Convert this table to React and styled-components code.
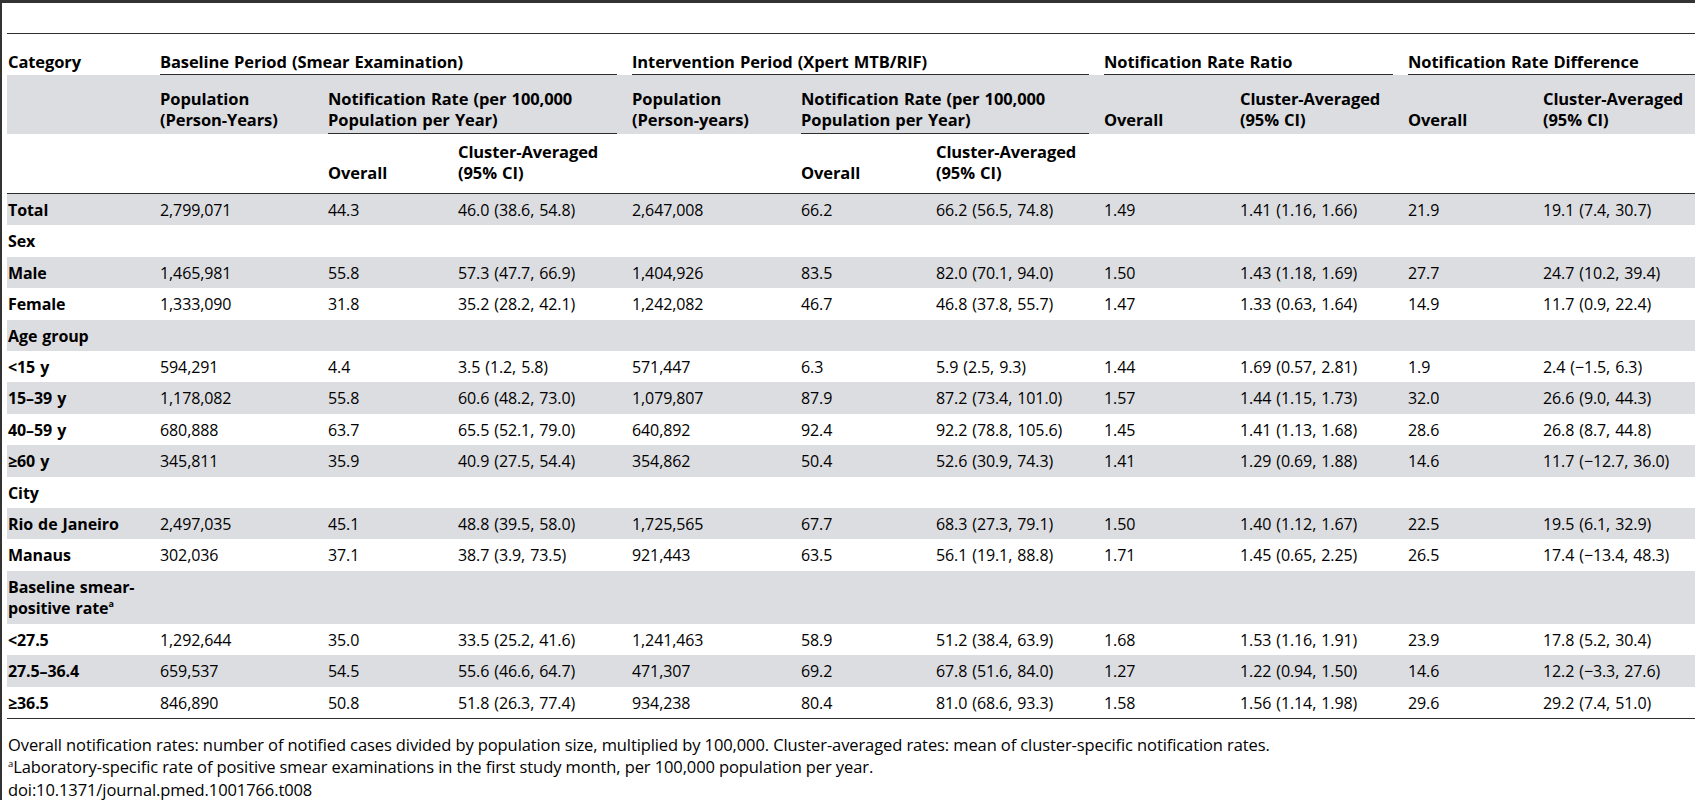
import React from 'react';
import styled, { createGlobalStyle } from 'styled-components';

const GlobalStyle = createGlobalStyle`
  html, body {
    margin: 0;
    padding: 0;
    background: #ffffff;
    overflow: hidden;
  }
  body {
    font-family: "Open Sans", "Liberation Sans", sans-serif;
    color: #000000;
  }
`;

const COLUMNS = '153px 168px 130px 174px 169px 135px 168px 136px 168px 135px 170px';
const SHADE = '#dcdde0';
const RULE = '#2e2e2e';

const Frame = styled.div`
  width: 1695px;
  height: 800px;
  box-sizing: border-box;
  border-top: 3px solid #333333;
  border-left: 2px solid #333333;
  padding-left: 5px;
  overflow: hidden;
`;

const Table = styled.div`
  width: 1726px;
  margin-top: 30px;
  border-top: 1px solid ${RULE};
  border-bottom: 1px solid ${RULE};
  font-size: 16px;
  letter-spacing: -0.1px;
  word-spacing: 1px;
`;

const Head = styled.div`
  border-bottom: 1px solid ${RULE};
  font-size: 16.5px;
`;

const HeadRow = styled.div`
  display: grid;
  grid-template-columns: ${COLUMNS};
  align-items: end;
  background: ${(p) => (p.$shaded ? SHADE : 'transparent')};
`;

const HeadCell = styled.div`
  grid-column: span ${(p) => p.$span || 1};
  font-weight: 700;
  line-height: 21px;
  white-space: nowrap;
  padding: ${(p) => p.$pad || '0'};
  margin-right: ${(p) => (p.$rule ? '15px' : '0')};
  border-bottom: ${(p) => (p.$rule ? `1px solid ${RULE}` : 'none')};
`;

const BodyRow = styled.div`
  display: grid;
  grid-template-columns: ${COLUMNS};
  align-items: center;
  background: ${(p) => (p.$shaded ? SHADE : 'transparent')};
`;

const Cell = styled.div`
  padding: 6px 0 4px;
  line-height: 21.4px;
  white-space: nowrap;
  font-weight: ${(p) => (p.$label ? 700 : 400)};
  padding-left: ${(p) => (p.$label ? '1px' : '0')};

  sup {
    font-size: 9px;
    line-height: 0;
    vertical-align: 7px;
  }
`;

const Notes = styled.div`
  margin-top: 15px;
  padding-left: 1px;
  font-size: 16.5px;
  letter-spacing: -0.1px;
  line-height: 22.5px;

  sup {
    font-size: 9.5px;
    line-height: 0;
    vertical-align: 6px;
  }
`;

const NoteLine = styled.div`
  white-space: nowrap;
`;

const rows = [
  ['Total', '2,799,071', '44.3', '46.0 (38.6, 54.8)', '2,647,008', '66.2', '66.2 (56.5, 74.8)', '1.49', '1.41 (1.16, 1.66)', '21.9', '19.1 (7.4, 30.7)'],
  ['Sex'],
  ['Male', '1,465,981', '55.8', '57.3 (47.7, 66.9)', '1,404,926', '83.5', '82.0 (70.1, 94.0)', '1.50', '1.43 (1.18, 1.69)', '27.7', '24.7 (10.2, 39.4)'],
  ['Female', '1,333,090', '31.8', '35.2 (28.2, 42.1)', '1,242,082', '46.7', '46.8 (37.8, 55.7)', '1.47', '1.33 (0.63, 1.64)', '14.9', '11.7 (0.9, 22.4)'],
  ['Age group'],
  ['<15 y', '594,291', '4.4', '3.5 (1.2, 5.8)', '571,447', '6.3', '5.9 (2.5, 9.3)', '1.44', '1.69 (0.57, 2.81)', '1.9', '2.4 (\u22121.5, 6.3)'],
  ['15\u201339 y', '1,178,082', '55.8', '60.6 (48.2, 73.0)', '1,079,807', '87.9', '87.2 (73.4, 101.0)', '1.57', '1.44 (1.15, 1.73)', '32.0', '26.6 (9.0, 44.3)'],
  ['40\u201359 y', '680,888', '63.7', '65.5 (52.1, 79.0)', '640,892', '92.4', '92.2 (78.8, 105.6)', '1.45', '1.41 (1.13, 1.68)', '28.6', '26.8 (8.7, 44.8)'],
  ['\u226560 y', '345,811', '35.9', '40.9 (27.5, 54.4)', '354,862', '50.4', '52.6 (30.9, 74.3)', '1.41', '1.29 (0.69, 1.88)', '14.6', '11.7 (\u221212.7, 36.0)'],
  ['City'],
  ['Rio de Janeiro', '2,497,035', '45.1', '48.8 (39.5, 58.0)', '1,725,565', '67.7', '68.3 (27.3, 79.1)', '1.50', '1.40 (1.12, 1.67)', '22.5', '19.5 (6.1, 32.9)'],
  ['Manaus', '302,036', '37.1', '38.7 (3.9, 73.5)', '921,443', '63.5', '56.1 (19.1, 88.8)', '1.71', '1.45 (0.65, 2.25)', '26.5', '17.4 (\u221213.4, 48.3)'],
  ['smear'],
  ['<27.5', '1,292,644', '35.0', '33.5 (25.2, 41.6)', '1,241,463', '58.9', '51.2 (38.4, 63.9)', '1.68', '1.53 (1.16, 1.91)', '23.9', '17.8 (5.2, 30.4)'],
  ['27.5\u201336.4', '659,537', '54.5', '55.6 (46.6, 64.7)', '471,307', '69.2', '67.8 (51.6, 84.0)', '1.27', '1.22 (0.94, 1.50)', '14.6', '12.2 (\u22123.3, 27.6)'],
  ['\u226536.5', '846,890', '50.8', '51.8 (26.3, 77.4)', '934,238', '80.4', '81.0 (68.6, 93.3)', '1.58', '1.56 (1.14, 1.98)', '29.6', '29.2 (7.4, 51.0)'],
];

const Label = ({ text }) => {
  if (text === 'smear') {
    return (
      <>
        Baseline smear-
        <br />
        positive rate<sup>a</sup>
      </>
    );
  }
  return text;
};

const App = () => {
  return (
    <>
      <GlobalStyle />
      <Frame>
        <Table>
          <Head>
            <HeadRow>
              <HeadCell $pad="17px 0 3px 1px">Category</HeadCell>
              <HeadCell $span={3} $rule $pad="17px 0 2px">Baseline Period (Smear Examination)</HeadCell>
              <HeadCell $span={3} $rule $pad="17px 0 2px">Intervention Period (Xpert MTB/RIF)</HeadCell>
              <HeadCell $span={2} $rule $pad="17px 0 2px">Notification Rate Ratio</HeadCell>
              <HeadCell $span={2} $rule $pad="17px 0 2px">Notification Rate Difference</HeadCell>
            </HeadRow>
            <HeadRow $shaded>
              <HeadCell />
              <HeadCell $pad="13px 0 4px">Population<br />(Person-Years)</HeadCell>
              <HeadCell $span={2} $rule $pad="13px 0 3px">Notification Rate (per 100,000<br />Population per Year)</HeadCell>
              <HeadCell $pad="13px 0 4px">Population<br />(Person-years)</HeadCell>
              <HeadCell $span={2} $rule $pad="13px 0 3px">Notification Rate (per 100,000<br />Population per Year)</HeadCell>
              <HeadCell $pad="13px 0 4px">Overall</HeadCell>
              <HeadCell $pad="13px 0 4px">Cluster-Averaged<br />(95% CI)</HeadCell>
              <HeadCell $pad="13px 0 4px">Overall</HeadCell>
              <HeadCell $pad="13px 0 4px">Cluster-Averaged<br />(95% CI)</HeadCell>
            </HeadRow>
            <HeadRow>
              <HeadCell />
              <HeadCell />
              <HeadCell $pad="7px 0 10px">Overall</HeadCell>
              <HeadCell $pad="7px 0 10px">Cluster-Averaged<br />(95% CI)</HeadCell>
              <HeadCell />
              <HeadCell $pad="7px 0 10px">Overall</HeadCell>
              <HeadCell $pad="7px 0 10px">Cluster-Averaged<br />(95% CI)</HeadCell>
            </HeadRow>
          </Head>
          {rows.map((row, i) => (
            <BodyRow key={i} $shaded={i % 2 === 0}>
              <Cell $label>
                <Label text={row[0]} />
              </Cell>
              {row.slice(1).map((value, j) => (
                <Cell key={j}>{value}</Cell>
              ))}
            </BodyRow>
          ))}
        </Table>
        <Notes>
          <NoteLine>
            Overall notification rates: number of notified cases divided by population size, multiplied by 100,000. Cluster-averaged rates: mean of cluster-specific notification rates.
          </NoteLine>
          <NoteLine>
            <sup>a</sup>Laboratory-specific rate of positive smear examinations in the first study month, per 100,000 population per year.
          </NoteLine>
          <NoteLine>doi:10.1371/journal.pmed.1001766.t008</NoteLine>
        </Notes>
      </Frame>
    </>
  );
};

export default App;
